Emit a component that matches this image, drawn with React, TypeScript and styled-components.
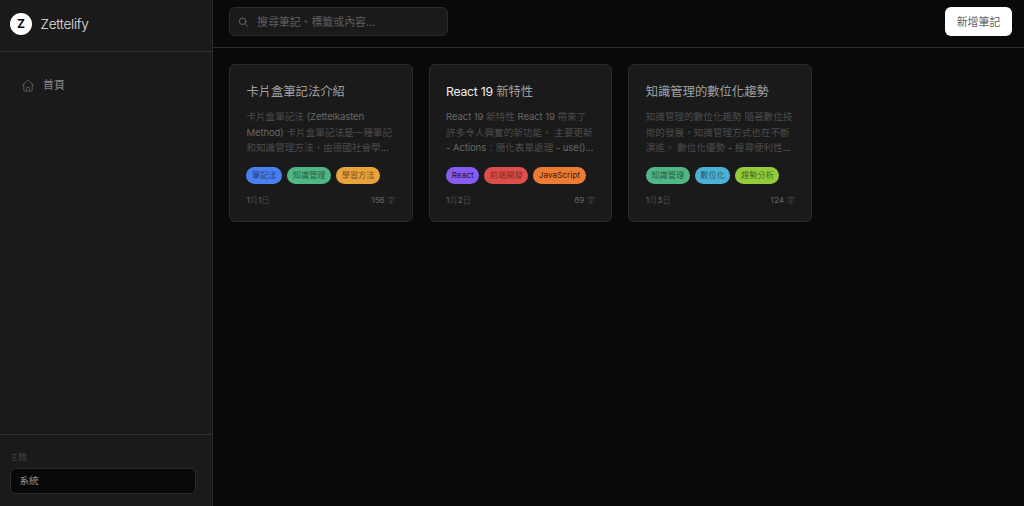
import React from 'react';
import styled, { createGlobalStyle } from 'styled-components';

const GlobalStyle = createGlobalStyle`
  * { box-sizing: border-box; }
  html, body { margin: 0; height: 100%; background: #090909; overflow: hidden; }
  #root { height: 100%; }
  body, button, input {
    font-family: Inter, 'Noto Sans CJK TC', sans-serif;
    font-weight: 400;
    letter-spacing: 0;
  }
`;

const Shell = styled.div`
  display: flex;
  width: 1024px;
  height: 506px;
`;

const Sidebar = styled.aside`
  display: flex;
  flex-direction: column;
  width: 213px;
  flex: none;
  background: #1a1a1a;
  border-right: 1px solid #2b2b2b;
`;

const Brand = styled.div`
  display: flex;
  align-items: center;
  gap: 8.5px;
  height: 52px;
  padding: 0 10px 4px;
  border-bottom: 1px solid #303030;
`;

const Logo = styled.div`
  display: grid;
  place-items: center;
  width: 22px;
  height: 22px;
  border-radius: 50%;
  background: #fff;
  color: #0a0a0a;
  font-size: 12px;
  font-weight: 700;
`;

const BrandName = styled.span`
  color: #e2e2e2;
  font-size: 13.65px;
  font-weight: 300;
  letter-spacing: -0.3px;
  line-height: 20px;
`;

const Nav = styled.nav`
  flex: 1;
  padding: 19px 10px;
`;

const NavItem = styled.a`
  display: flex;
  align-items: center;
  gap: 9.5px;
  height: 28px;
  padding: 0 11.5px;
  color: #858585;
  font-size: 10.9px;
  line-height: 16px;
  svg { color: #5e5e5e; }
`;

const ThemePanel = styled.div`
  display: flex;
  flex-direction: column;
  gap: 4.5px;
  height: 72px;
  padding: 16px 16px 12px 10px;
  border-top: 1px solid #303030;
`;

const ThemeLabel = styled.label`
  color: #424242;
  font-size: 8.2px;
  line-height: 12px;
`;

const ThemeSelect = styled.div`
  height: 26px;
  padding: 0 8.5px;
  border: 1px solid #2b2b2b;
  border-radius: 6px;
  background: #080808;
  color: #939393;
  font-size: 9.5px;
  line-height: 23px;
`;

const Main = styled.main`
  flex: 1;
  min-width: 0;
`;

const TopBar = styled.header`
  display: flex;
  align-items: center;
  justify-content: space-between;
  height: 48px;
  padding: 0 12px 4px 16px;
  border-bottom: 1px solid #2b2b2b;
`;

const Search = styled.div`
  display: flex;
  align-items: center;
  gap: 8.5px;
  width: 219px;
  height: 29px;
  padding: 1px 8px 0 7.5px;
  border: 1px solid #2b2b2b;
  border-radius: 6px;
  background: #1a1a1a;
  color: #6c6c6c;
`;

const SearchText = styled.span`
  color: #5f5f5f;
  font-size: 10.9px;
  line-height: 16px;
  white-space: nowrap;
`;

const AddButton = styled.button`
  width: 67px;
  height: 29px;
  padding: 1px 0 0;
  border: 0;
  border-radius: 6px;
  background: #fff;
  color: #626262;
  font-size: 10.9px;
  line-height: 16px;
`;

const Grid = styled.section`
  display: grid;
  grid-template-columns: repeat(3, 183.6px);
  gap: 16.1px;
  padding: 16px;
`;

const Card = styled.article`
  height: 158px;
  padding: 18px 16.4px 16px;
  border: 1px solid #2b2b2b;
  border-radius: 6px;
  background: #1a1a1a;
`;

const Title = styled.h3`
  margin: 0 0 8px;
  color: #a0a0a0;
  font-size: 12.3px;
  font-weight: 400;
  line-height: 18px;
  white-space: nowrap;
`;

const Excerpt = styled.p`
  margin: 0 0 11px;
  color: #4b4b4b;
  font-size: 9.6px;
  line-height: 15.6px;
  white-space: nowrap;
`;

const Latin = styled.span<{ $tone: string; $tracking?: number }>`
  color: ${(p) => p.$tone};
  letter-spacing: ${(p) => p.$tracking ?? 0}px;
`;

const Tags = styled.div`
  display: flex;
  gap: 5px;
  margin-bottom: 10px;
`;

const Tag = styled.span<{ $bg: string; $fg: string }>`
  height: 17px;
  padding: 0 5.6px;
  border-radius: 9px;
  background: ${(p) => p.$bg};
  color: ${(p) => p.$fg};
  font-size: 8.2px;
  line-height: 17px;
  white-space: nowrap;
`;

const Meta = styled.div`
  display: flex;
  justify-content: space-between;
  color: #454545;
  font-size: 8.2px;
  line-height: 12px;
`;

/* Latin runs are drawn in a brighter tone than the Chinese text around them. */
const Mixed = ({ text, tone, tracking }: { text: string; tone: string; tracking?: number }) => (
  <>
    {text.split(/([\x21-\x7e]+(?: [\x21-\x7e]+)*)/).map((part, i) =>
      i % 2 ? <Latin key={i} $tone={tone} $tracking={tracking}>{part}</Latin> : part,
    )}
  </>
);

const notes = [
  {
    title: '卡片盒筆記法介紹',
    lines: ['卡片盒筆記法 (Zettelkasten', 'Method) 卡片盒筆記法是一種筆記', '和知識管理方法，由德國社會學...'],
    tracking: -0.12,
    tags: [
      ['筆記法', '#4a7ff0', '#244184'],
      ['知識管理', '#50b686', '#285f45'],
      ['學習方法', '#eaa23b', '#7c5520'],
    ],
    date: '1月1日',
    count: '156 字',
  },
  {
    title: 'React 19 新特性',
    lines: ['React 19 新特性 React 19 帶來了', '許多令人興奮的新功能。 主要更新', '- Actions：簡化表單處理 - use()...'],
    tracking: -0.13,
    tags: [
      ['React', '#855bf0', '#21163e'],
      ['前端開發', '#dd4f4c', '#822e2d'],
      ['JavaScript', '#ec7b33', '#3f210e'],
    ],
    date: '1月2日',
    count: '89 字',
  },
  {
    title: '知識管理的數位化趨勢',
    lines: ['知識管理的數位化趨勢 隨著數位技', '術的發展，知識管理方式也在不斷', '演進。 數位化優勢 - 搜尋便利性...'],
    tracking: -0.25,
    tags: [
      ['知識管理', '#50b686', '#285f45'],
      ['數位化', '#4bb1d4', '#275f73'],
      ['趨勢分析', '#93cb3d', '#4d6b20'],
    ],
    date: '1月3日',
    count: '124 字',
  },
];

const HomeIcon = () => (
  <svg width="12" height="13" viewBox="0 0 12 13" fill="none" stroke="currentColor" strokeWidth="0.9" strokeLinecap="round" strokeLinejoin="round">
    <path d="M.5 6.4 5.5 1.2a.7.7 0 0 1 1 0l5 5.2M1.8 5.2v6.1c0 .4.3.7.7.7h7c.4 0 .7-.3.7-.7V5.2M4.3 12V9c0-.4.3-.7.7-.7h2c.4 0 .7.3.7.7v3" />
  </svg>
);

const SearchIcon = () => (
  <svg width="11" height="11" viewBox="0 0 11 11" fill="none" stroke="currentColor" strokeWidth="0.9" strokeLinecap="round">
    <circle cx="4.6" cy="4.3" r="3.3" />
    <path d="m7 6.7 2.6 2.6" />
  </svg>
);

export default function App() {
  return (
    <Shell>
      <GlobalStyle />
      <Sidebar>
        <Brand>
          <Logo>Z</Logo>
          <BrandName>Zettelify</BrandName>
        </Brand>
        <Nav>
          <NavItem>
            <HomeIcon />
            首頁
          </NavItem>
        </Nav>
        <ThemePanel>
          <ThemeLabel>主題</ThemeLabel>
          <ThemeSelect>系統</ThemeSelect>
        </ThemePanel>
      </Sidebar>
      <Main>
        <TopBar>
          <Search>
            <SearchIcon />
            <SearchText>搜尋筆記、標籤或內容...</SearchText>
          </Search>
          <AddButton>新增筆記</AddButton>
        </TopBar>
        <Grid>
          {notes.map((note) => (
            <Card key={note.title}>
              <Title><Mixed text={note.title} tone="#ededed" tracking={-0.3} /></Title>
              <Excerpt>
                {note.lines.map((line, i) => (
                  <React.Fragment key={line}>
                    {i > 0 && <br />}
                    <Mixed text={line} tone="#676767" tracking={note.tracking} />
                  </React.Fragment>
                ))}
              </Excerpt>
              <Tags>
                {note.tags.map(([name, bg, fg]) => (
                  <Tag key={name} $bg={bg} $fg={fg}>{name}</Tag>
                ))}
              </Tags>
              <Meta>
                <span><Mixed text={note.date} tone="#676767" /></span>
                <span><Mixed text={note.count} tone="#676767" /></span>
              </Meta>
            </Card>
          ))}
        </Grid>
      </Main>
    </Shell>
  );
}
